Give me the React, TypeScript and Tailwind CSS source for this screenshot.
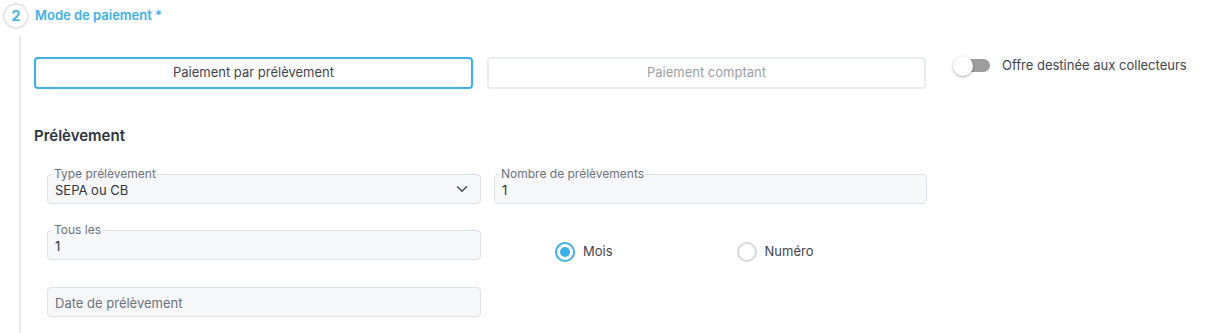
import React from "react";
import { ChevronDown } from "lucide-react";

function Field({ label, value, chevron, placeholder }: { label?: string; value?: string; chevron?: boolean; placeholder?: boolean }) {
  return (
    <div className="relative h-[30px] rounded-[4px] border border-[#dde2e8] bg-[#f7f8fa] flex items-center justify-between pl-[7px] pr-[9px]">
      {label && (
        <span className="absolute left-[5px] top-[-8px] px-[1px] text-[12px] leading-[14px] text-[#6b7280] bg-[linear-gradient(to_bottom,#ffffff_55%,#f7f8fa_55%)]">
          {label}
        </span>
      )}
      <span className={`text-[13px] leading-[17px] mt-[2px] ${placeholder ? "text-[#6b7280]" : "text-[#2f3540]"}`}>{value}</span>
      {chevron && <ChevronDown size={18} strokeWidth={1.7} className="text-[#374151]" />}
    </div>
  );
}

function Radio({ checked, label }: { checked?: boolean; label: string }) {
  return (
    <div className="flex items-center gap-[8px]">
      {checked ? (
        <span className="w-[20px] h-[20px] rounded-full border-2 border-[#3bb0e9] flex items-center justify-center">
          <span className="w-[10px] h-[10px] rounded-full bg-[#3bb0e9]" />
        </span>
      ) : (
        <span className="w-[20px] h-[20px] rounded-full border-2 border-[#d4d8de]" />
      )}
      <span className="text-[13px] text-[#3f4550]">{label}</span>
    </div>
  );
}

export default function App() {
  return (
    <div
      className="w-[1220px] h-[333px] bg-white overflow-hidden"
      style={{ fontFamily: "Inter, 'Noto Sans', sans-serif" }}
    >
      <div className="flex items-center pt-[3px] pl-[3px] gap-[6px]">
        <div className="w-[26px] h-[26px] rounded-full border-2 border-[#e4e8ee] flex items-center justify-center text-[15px] font-semibold text-[#3bb0e9]">
          2
        </div>
        <span className="text-[13px] font-semibold text-[#3bb0e9]">Mode de paiement *</span>
      </div>
      <div className="ml-[19px] mt-[7px] border-l-2 border-[#e6ebf2] pl-[13px] pt-[21px] h-[300px]">
        <div className="flex items-start">
          <div className="w-[439px] h-[32px] rounded-[4px] border-2 border-[#3bb0e9] flex items-center justify-center text-[13px] text-[#3f4550]">
            Paiement par prélèvement
          </div>
          <div className="ml-[14px] w-[439px] h-[32px] rounded-[4px] border-2 border-[#e9edf2] flex items-center justify-center text-[13px] text-[#9aa0a8]">
            Paiement comptant
          </div>
          <div className="ml-[27px] flex items-center gap-[12px] -mt-[1px]">
            <div className="relative w-[37px] h-[14px] flex items-center">
              <div className="ml-[4px] w-[33px] h-[13px] rounded-full bg-[#9e9e9e]" />
              <div className="absolute left-0 top-[-3px] w-[20px] h-[20px] rounded-full bg-white shadow-[0_1px_3px_rgba(0,0,0,0.35)]" />
            </div>
            <span className="text-[13px] text-[#3f4550]">Offre destinée aux collecteurs</span>
          </div>
        </div>
        <div className="mt-[37px] text-[15px] font-semibold text-[#2d3440] leading-[20px]">Prélèvement</div>
        <div className="pl-[13px] mt-[28px] flex flex-col">
          <div className="flex gap-[13px]">
            <div className="w-[434px]">
              <Field label="Type prélèvement" value="SEPA ou CB" chevron />
            </div>
            <div className="w-[433px]">
              <Field label="Nombre de prélèvements" value="1" />
            </div>
          </div>
          <div className="flex gap-[13px] mt-[26px] items-start">
            <div className="w-[434px]">
              <Field label="Tous les" value="1" />
            </div>
            <div className="w-[433px] mt-[12px] flex items-center pl-[61px] gap-[124px]">
              <Radio checked label="Mois" />
              <Radio label="Numéro" />
            </div>
          </div>
          <div className="mt-[25px] w-[434px]">
            <Field value="Date de prélèvement" placeholder />
          </div>
        </div>
      </div>
    </div>
  );
}
